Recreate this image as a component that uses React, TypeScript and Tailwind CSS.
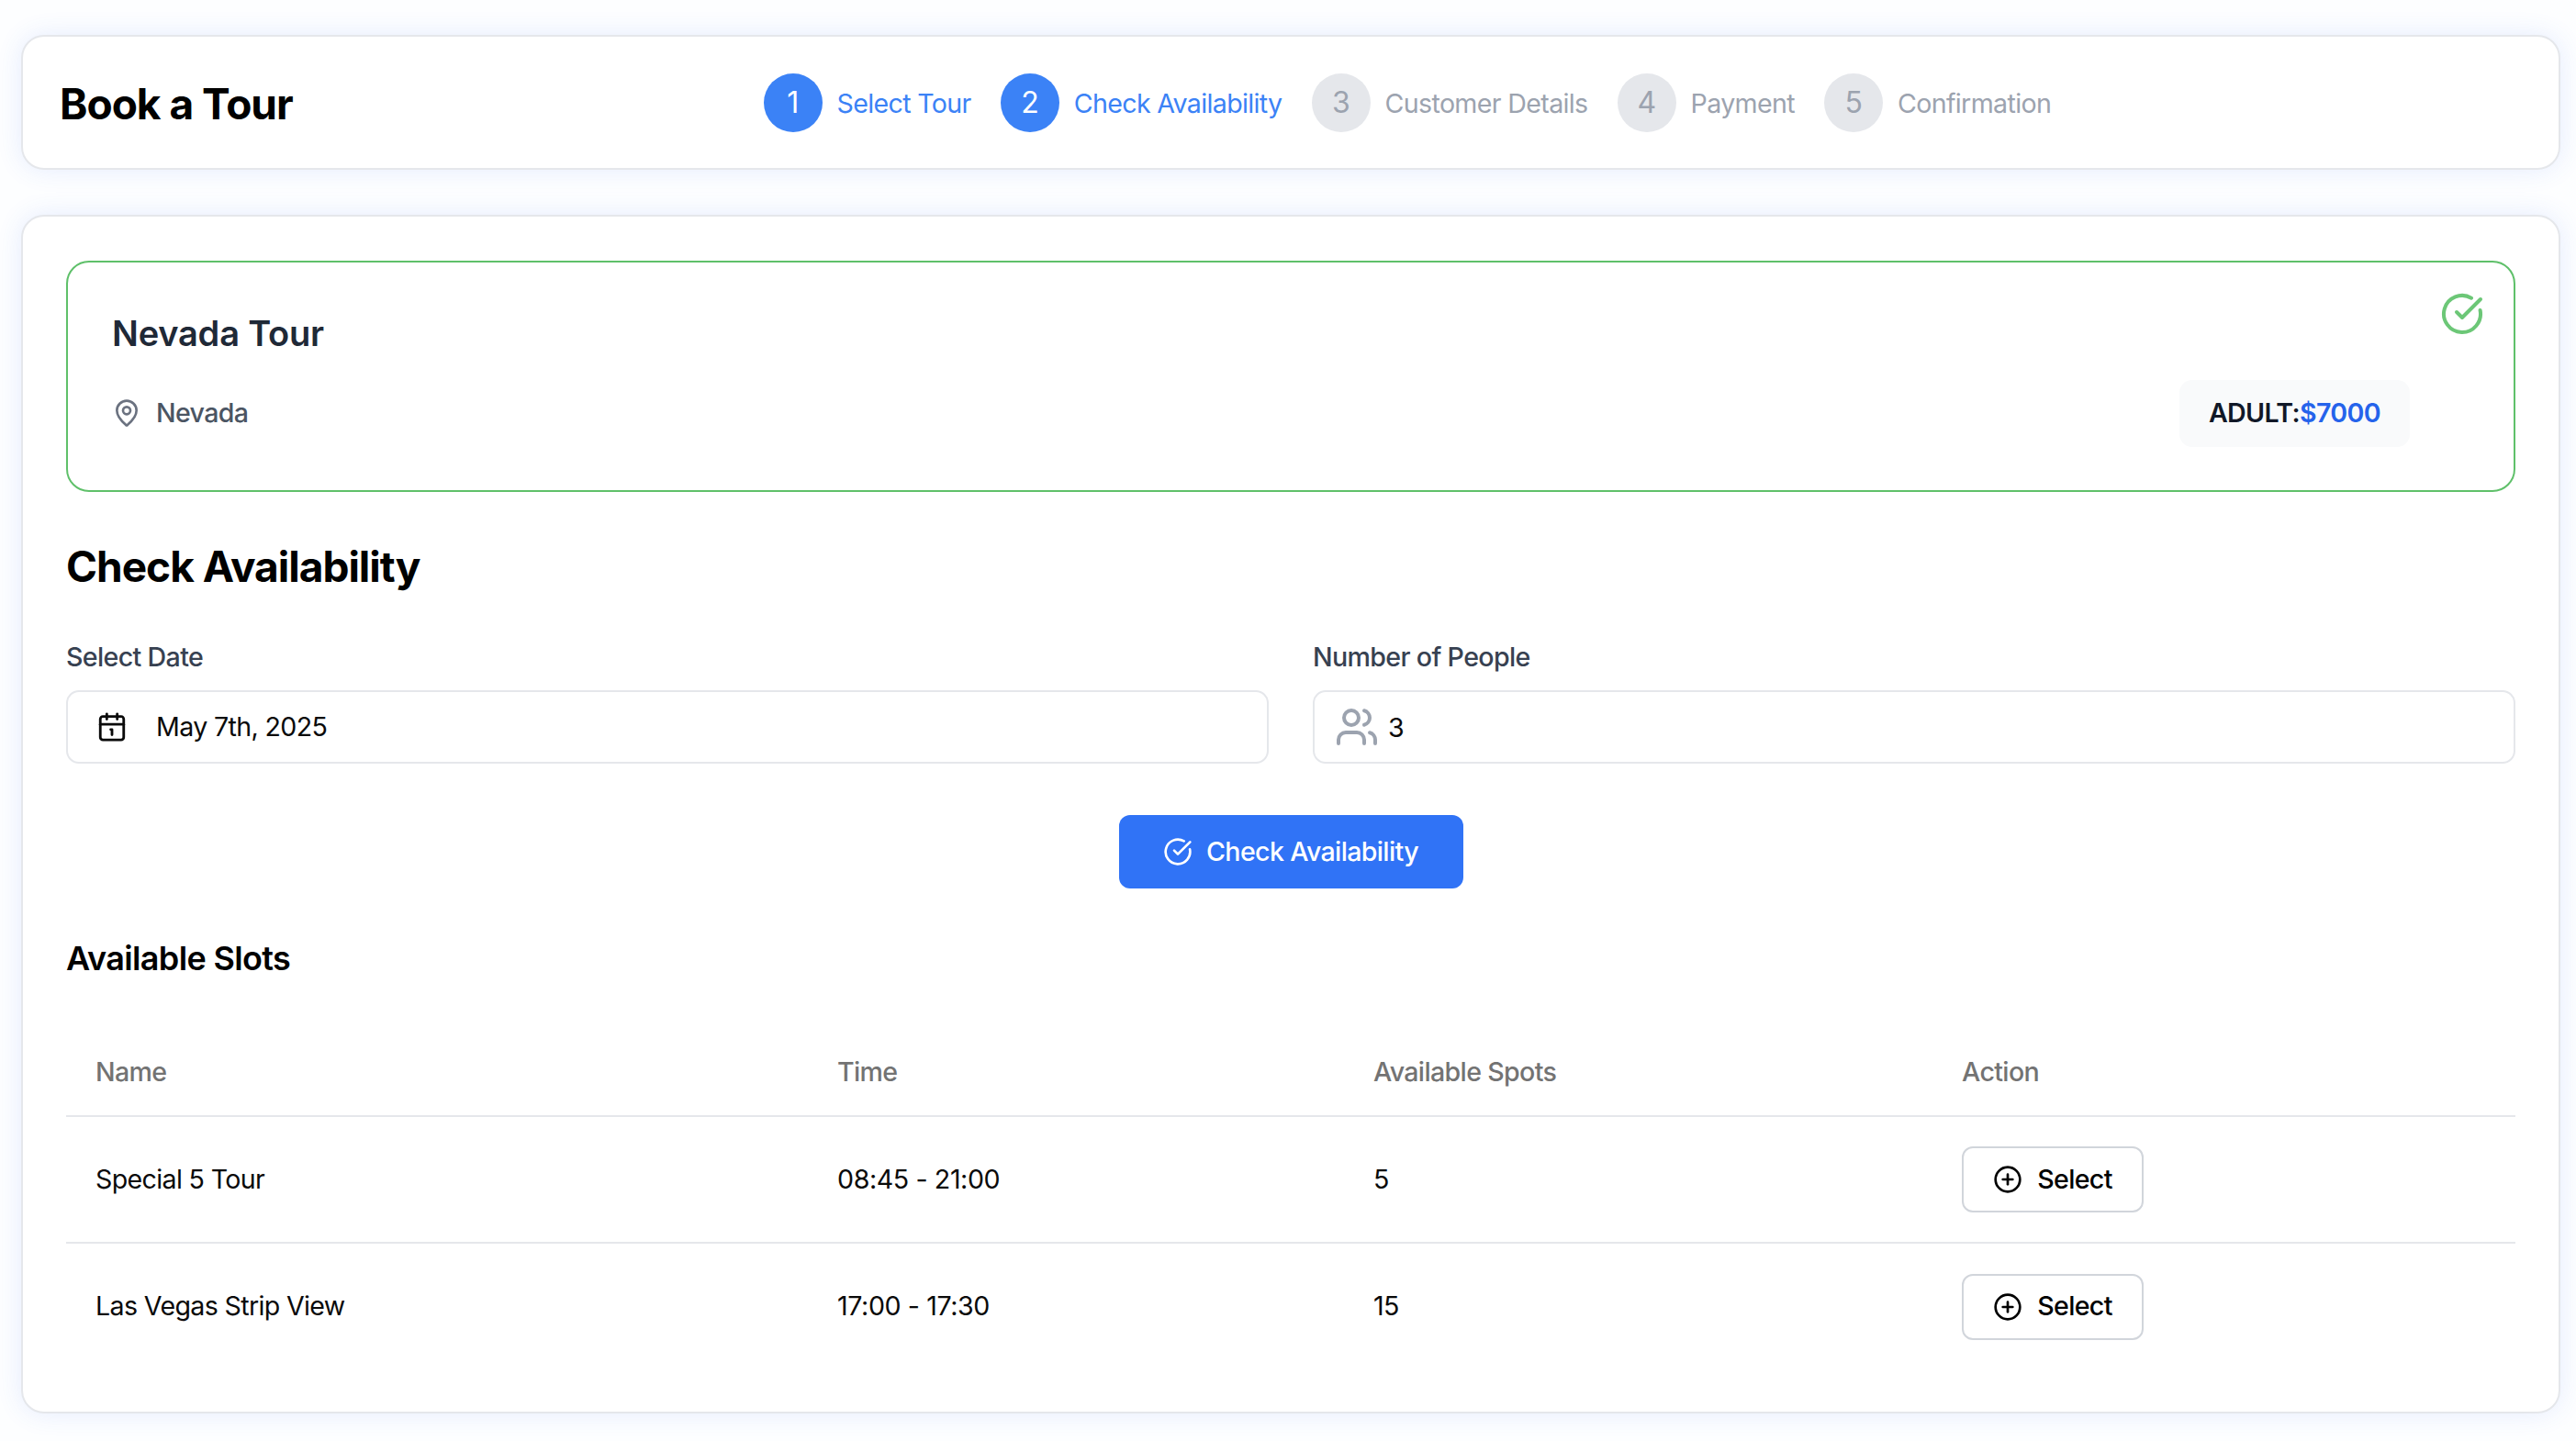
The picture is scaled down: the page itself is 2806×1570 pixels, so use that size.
import { Calendar1, CircleCheckBig, CirclePlus, MapPin, Users } from "lucide-react";

const steps = [
  { n: 1, label: "Select Tour", active: true },
  { n: 2, label: "Check Availability", active: true },
  { n: 3, label: "Customer Details", active: false },
  { n: 4, label: "Payment", active: false },
  { n: 5, label: "Confirmation", active: false },
];

const slots = [
  { name: "Special 5 Tour", time: "08:45 - 21:00", spots: 5 },
  { name: "Las Vegas Strip View", time: "17:00 - 17:30", spots: 15 },
];

function Step({ n, label, active }: { n: number; label: string; active: boolean }) {
  return (
    <div className="flex items-center gap-[16px]">
      <div
        className={`flex h-[64px] w-[64px] items-center justify-center rounded-full text-[32px] ${
          active ? "bg-[#3b82f6] text-white" : "bg-[#e5e7eb] text-[#9ca3af]"
        }`}
      >
        {n}
      </div>
      <span className={`pt-[3px] text-[28.6px] ${active ? "text-[#3b82f6]" : "text-[#9ca3af]"}`}>{label}</span>
    </div>
  );
}

export default function App() {
  return (
    <div className="min-h-screen bg-[#fdfeff] pt-[38px] pr-[17px] pb-[30px] pl-[23px] font-[Inter,sans-serif] text-[28.6px] tracking-[-0.65px]">
      <header className="flex h-[147px] items-center rounded-[25px] border-2 border-[#e5e7eb] bg-white pr-[40px] pl-[40px] shadow-[0_0_28px_rgba(59,110,246,0.12)]">
        <h1 className="pt-[3px] text-[46px] font-bold tracking-[-1px] text-black">Book a Tour</h1>
        <div className="flex flex-1 items-center justify-center gap-[32px]">
          {steps.map((s) => (
            <Step key={s.n} {...s} />
          ))}
        </div>
      </header>

      <main className="mt-[49px] rounded-[25px] border-2 border-[#e5e7eb] bg-white px-[47px] pt-[48px] pb-[46px] shadow-[0_0_28px_rgba(59,110,246,0.12)]">
        <section className="relative rounded-[25px] border-2 border-[#5fc06a] pt-[48px] pr-[113px] pb-[47px] pl-[48px]">
          <CircleCheckBig size={48} className="absolute top-[32px] right-[32px] text-[#6cc777]" />
          <h2 className="text-[38px] leading-[58px] font-semibold tracking-[-0.2px] text-[#1f2937]">Nevada Tour</h2>
          <div className="mt-[22px] flex h-[73px] items-center justify-between">
            <div className="flex items-center gap-[16px] text-[#4b5563]">
              <MapPin size={32} className="text-[#6b7280]" />
              <span className="font-medium">Nevada</span>
            </div>
            <div className="flex h-[73px] items-center rounded-[14px] bg-[#f9fafb] px-[32px] font-semibold text-[#111827]">
              ADULT:<span className="text-[#2563eb]">$7000</span>
            </div>
          </div>
        </section>

        <h2 className="mt-[51px] text-[46px] leading-[60px] font-bold tracking-[-1px] text-black">Check Availability</h2>

        <div className="mt-[49px] grid grid-cols-2 gap-[48px]">
          <div>
            <label className="block leading-[40px] font-medium text-[#374151]">Select Date</label>
            <div className="mt-[16px] flex h-[80px] items-center gap-[31px] rounded-[14px] border-2 border-[#e5e7eb] pl-[31px] text-[#0a0a0a]">
              <Calendar1 size={34} />
              <span>May 7th, 2025</span>
            </div>
          </div>
          <div>
            <label className="block leading-[40px] font-medium text-[#374151]">Number of People</label>
            <div className="mt-[16px] flex h-[80px] items-center gap-[10px] rounded-[14px] border-2 border-[#e5e7eb] pl-[22px] text-[#0a0a0a]">
              <Users size={48} className="text-[#9ca3af]" />
              <span className="pt-[2px]">3</span>
            </div>
          </div>
        </div>

        <div className="mt-[56px] flex justify-center">
          <button className="flex h-[80px] w-[375px] items-center justify-center gap-[15px] rounded-[12px] bg-[#3073f6] font-medium text-white">
            <CircleCheckBig size={32} />
            Check Availability
          </button>
        </div>

        <h3 className="mt-[50px] pt-[2px] text-[36px] leading-[48px] font-semibold text-black">Available Slots</h3>

        <table className="mt-[52px] w-full table-fixed border-collapse text-left">
          <thead>
            <tr className="h-[96px] border-b-2 border-[#e5e7eb] text-[#737373]">
              <th className="w-[808px] pt-[2px] pl-[32px] font-medium">Name</th>
              <th className="w-[584px] pt-[2px] pl-[32px] font-medium">Time</th>
              <th className="w-[641px] pt-[2px] pl-[32px] font-medium">Available Spots</th>
              <th className="pt-[2px] pl-[32px] font-medium">Action</th>
            </tr>
          </thead>
          <tbody>
            {slots.map((slot, i) => (
              <tr key={slot.name} className={`h-[138px] text-[#0a0a0a] ${i === 0 ? "border-b-2 border-[#e5e7eb]" : ""}`}>
                <td className="pl-[32px]">{slot.name}</td>
                <td className="pl-[32px] tracking-[-0.4px]">{slot.time}</td>
                <td className="pl-[32px]">{slot.spots}</td>
                <td className="pl-[32px]">
                  <button className="flex h-[72px] w-[198px] items-center justify-center gap-[16px] rounded-[12px] border-2 border-[#d1d5db] font-medium text-black">
                    <CirclePlus size={32} />
                    Select
                  </button>
                </td>
              </tr>
            ))}
          </tbody>
        </table>
      </main>
    </div>
  );
}
